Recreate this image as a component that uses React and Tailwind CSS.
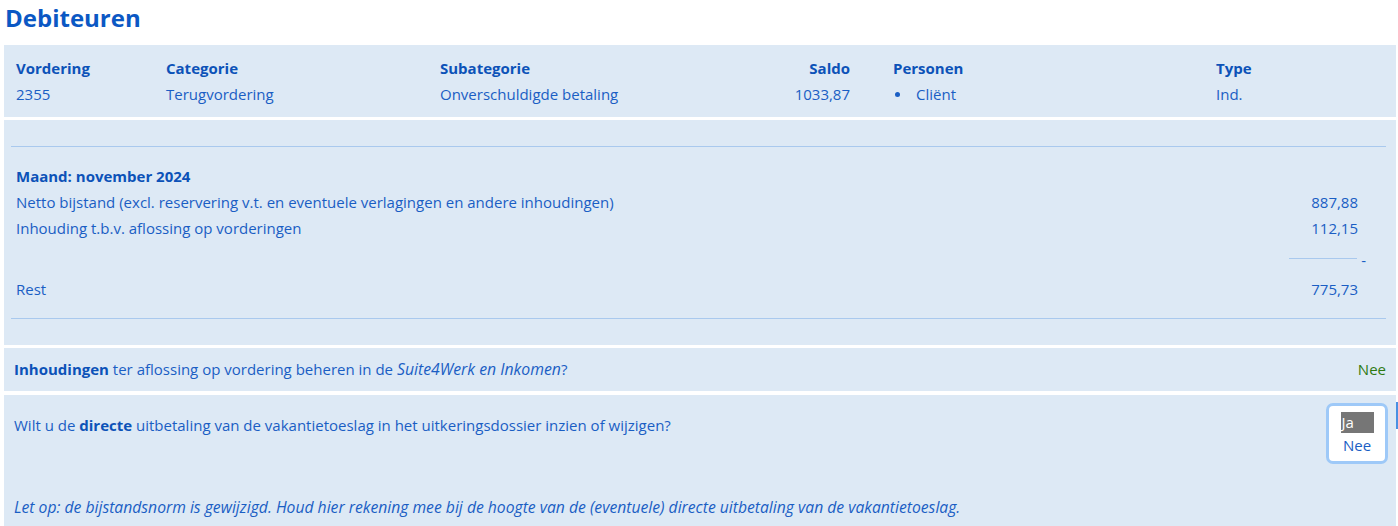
import React from 'react';

const rows = [
  { label: 'Netto bijstand (excl. reservering v.t. en eventuele verlagingen en andere inhoudingen)', value: '887,88' },
  { label: 'Inhouding t.b.v. aflossing op vorderingen', value: '112,15' },
];

export default function App() {
  return (
    <div className="min-h-screen bg-white pl-[4px] pr-[2px] text-[15px] text-[#1a5ec4]" style={{ fontFamily: '"Open Sans", "Noto Sans", sans-serif' }}>
      <h1 className="pl-[1px] h-[45px] leading-[36px] text-[24px] font-bold text-[#0b58c4]">Debiteuren</h1>

      {/* vordering */}
      <div className="bg-[#dde9f5] pt-[10px] pb-[10px] pl-[12px] leading-[26px]">
        <div className="grid grid-cols-[150px_274px_320px_133px_323px_1fr]">
          <div className="font-bold text-[#0c52b8]">Vordering</div>
          <div className="font-bold text-[#0c52b8]">Categorie</div>
          <div className="font-bold text-[#0c52b8]">Subategorie</div>
          <div className="font-bold text-[#0c52b8] text-right pr-[43px]">Saldo</div>
          <div className="font-bold text-[#0c52b8]">Personen</div>
          <div className="font-bold text-[#0c52b8]">Type</div>
          <div>2355</div>
          <div>Terugvordering</div>
          <div>Onverschuldigde betaling</div>
          <div className="text-right pr-[43px]">1033,87</div>
          <div className="flex items-center">
            <span className="w-[5px] h-[5px] rounded-full bg-[#1a5ec4] ml-[2px] mr-[16px]" />
            <span>Cliënt</span>
          </div>
          <div>Ind.</div>
        </div>
      </div>

      {/* berekening */}
      <div className="mt-[3px] bg-[#dde9f5] pt-[26px] pb-[26px] pl-[7px] pr-[10px] leading-[26px]">
        <div className="border-t border-[#a9c9ee]" />
        <div className="pl-[5px] pr-[28px] pt-[16px]">
          <div className="font-bold text-[#0c52b8]">Maand: november 2024</div>
          {rows.map((r) => (
            <div key={r.label} className="flex justify-between">
              <span>{r.label}</span>
              <span>{r.value}</span>
            </div>
          ))}
          <div className="h-[35px] flex justify-end items-start pt-[17px] -mr-[28px] pr-[20px]">
            <div className="w-[68px] border-t border-[#a9c9ee]" />
            <span className="ml-[4px] leading-[6px] -mt-[1px]">-</span>
          </div>
          <div className="flex justify-between">
            <span>Rest</span>
            <span>775,73</span>
          </div>
        </div>
        <div className="mt-[16px] border-t border-[#a9c9ee]" />
      </div>

      {/* inhoudingen */}
      <div className="mt-[3px] bg-[#dde9f5] h-[43px] px-[10px] flex items-center justify-between">
        <span>
          <b className="text-[#0c52b8]">Inhoudingen</b> ter aflossing op vordering beheren in de <i className="text-[15.8px]">Suite4Werk en Inkomen</i>?
        </span>
        <span className="text-[#2f7a12]">Nee</span>
      </div>

      {/* vakantietoeslag */}
      <div className="relative mt-[4px] bg-[#dde9f5] pl-[10px] pr-[8px] pb-[12px] leading-[26px]">
        <div className="flex justify-between items-start">
          <span className="pt-[17px]">
            Wilt u de <b className="text-[#0c52b8]">directe</b> uitbetaling van de vakantietoeslag in het uitkeringsdossier inzien of wijzigen?
          </span>
          <div className="mt-[8px] w-[62px] h-[61px] border-[3px] border-[#9ec9f8] rounded-[7px] bg-white flex flex-col items-center pt-[6px]">
            <div className="w-[33px] h-[21px] bg-[#767676] text-white leading-[21px] pl-[1px]">Ja</div>
            <div className="leading-[24px]">Nee</div>
          </div>
        </div>
        <div className="absolute right-[-2px] top-[7px] w-[2px] h-[27px] bg-[#4a90e2]" />
        <p className="mt-[30px] italic text-[15.7px]">
          Let op: de bijstandsnorm is gewijzigd. Houd hier rekening mee bij de hoogte van de (eventuele) directe uitbetaling van de vakantietoeslag.
        </p>
      </div>
    </div>
  );
}
